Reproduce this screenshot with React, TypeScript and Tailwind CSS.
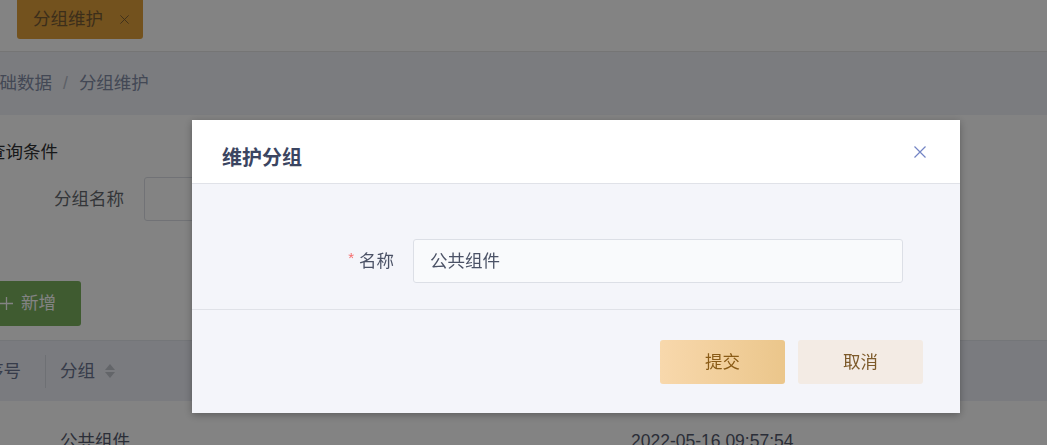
import { FunctionComponent } from "react";

const font = "font-['Liberation_Sans','Noto_Sans_CJK_SC',sans-serif]";

const CloseIcon: FunctionComponent<{ className?: string; color: string }> = ({ className, color }) => (
  <svg className={className} viewBox="0 0 12 12" fill="none">
    <path d="M0.5 0.5L11.5 11.5M11.5 0.5L0.5 11.5" stroke={color} strokeWidth="1.2" />
  </svg>
);

const SortIcon: FunctionComponent = () => (
  <svg className="w-[12px] h-[16px] ml-[9px]" viewBox="0 0 12 16">
    <path d="M6 1L11 7H1Z" fill="#c0c4cc" />
    <path d="M6 15L11 9H1Z" fill="#c0c4cc" />
  </svg>
);

const PageBehind: FunctionComponent = () => {
  return (
    <div className="flex flex-col w-full bg-white">
      {/* tab bar */}
      <div className="shrink-0 h-[52px] border-b border-[#e4e4e4] flex items-start pl-[17px]">
        <div className="h-[39px] w-[126px] bg-[#e0a03c] rounded-b-[3px] flex items-center pl-[16px] text-[17.5px] text-[#765a34]">
          <span>分组维护</span>
          <CloseIcon className="w-[9px] h-[9px] ml-[17px]" color="#765a34" />
        </div>
      </div>

      <div className="-ml-[40px] flex flex-col">
        {/* breadcrumb */}
        <div className="shrink-0 h-[63px] bg-[#eff1f7] flex items-center pl-[22px] text-[17.5px] text-[#828ca5]">
          <span>基础数据</span>
          <span className="mx-[11px] text-[#b4bac8]">/</span>
          <span>分组维护</span>
        </div>

        {/* query */}
        <div className="pt-[25px] pl-[28px] text-[17.5px] leading-[24px] text-[#303133]">查询条件</div>
        <div className="mt-[13px] flex items-center">
          <div className="w-[184px] pr-[20px] text-right text-[17.5px] text-[#666a70]">分组名称</div>
          <div className="w-[220px] h-[44px] border border-[#dcdfe6] rounded-[3px] bg-white" />
        </div>

        <div className="mt-[60px] ml-[16px] h-[45px] w-[105px] bg-[#7bb15f] rounded-[3px] flex items-center pl-[24px] text-white text-[17.5px]">
          <svg className="w-[13px] h-[13px]" viewBox="0 0 13 13">
            <path d="M6.5 0V13M0 6.5H13" stroke="#fff" strokeWidth="1.3" />
          </svg>
          <span className="ml-[8px]">新增</span>
        </div>

        {/* table */}
        <div className="mt-[14px] border-t border-[#e2e5ec] h-[61px] bg-[#edeff7] flex items-center text-[17.5px] text-[#6b7590]">
          <div className="w-[86px] pl-[26px] h-[33px] flex items-center border-r border-[#d6dae2]">序号</div>
          <div className="pl-[14px] flex items-center">
            分组
            <SortIcon />
          </div>
        </div>
        <div className="h-[80px] flex items-center text-[17.5px] text-[#545a6d]">
          <div className="w-[86px]" />
          <div className="pl-[14px] w-[585px]">公共组件</div>
          <div>2022-05-16 09:57:54</div>
        </div>
      </div>
    </div>
  );
};

const Dialog: FunctionComponent = () => {
  return (
    <div className="fixed left-[192px] top-[120px] w-[768px] bg-[#f4f5fa] shadow-[0_2px_8px_rgba(0,0,0,0.3)]">
      <div className="h-[64px] bg-white border-b border-[#e0e2e8] flex items-center justify-between pl-[30px] pr-[34px]">
        <span className="text-[20px] font-bold text-[#3b4561] pt-[12px]">维护分组</span>
        <CloseIcon className="w-[12px] h-[12px]" color="#7384c4" />
      </div>

      <div className="pt-[55px] pb-[26px] flex items-center border-b border-[#e0e2e8]">
        <div className="w-[221px] pr-[19px] flex items-center justify-end text-[17.5px] text-[#4b5266]">
          <span className="text-[#f56c6c] text-[15px] mr-[5px] -mt-[6px]">*</span>
          <span>名称</span>
        </div>
        <div className="w-[490px] h-[44px] bg-[#f9fafc] border border-[#dcdfe6] rounded-[3px] flex items-center pl-[16px] text-[17.5px] text-[#4b5266]">
          公共组件
        </div>
      </div>

      <div className="pt-[30px] pb-[29px] pr-[37px] flex justify-end gap-[13px]">
        <button className="w-[125px] h-[44px] rounded-[3px] bg-gradient-to-r from-[#f8d8ac] to-[#ebc68b] text-[#8a5b16] text-[17.5px]">
          提交
        </button>
        <button className="w-[125px] h-[44px] rounded-[3px] bg-[#f3ebe4] text-[#7d5a2a] text-[17.5px]">
          取消
        </button>
      </div>
    </div>
  );
};

const App: FunctionComponent = () => {
  return (
    <div className={`relative w-full h-screen overflow-hidden ${font}`}>
      <PageBehind />
      <div className="fixed inset-0 bg-[rgba(0,0,0,0.486)]" />
      <Dialog />
    </div>
  );
};

export default App;
